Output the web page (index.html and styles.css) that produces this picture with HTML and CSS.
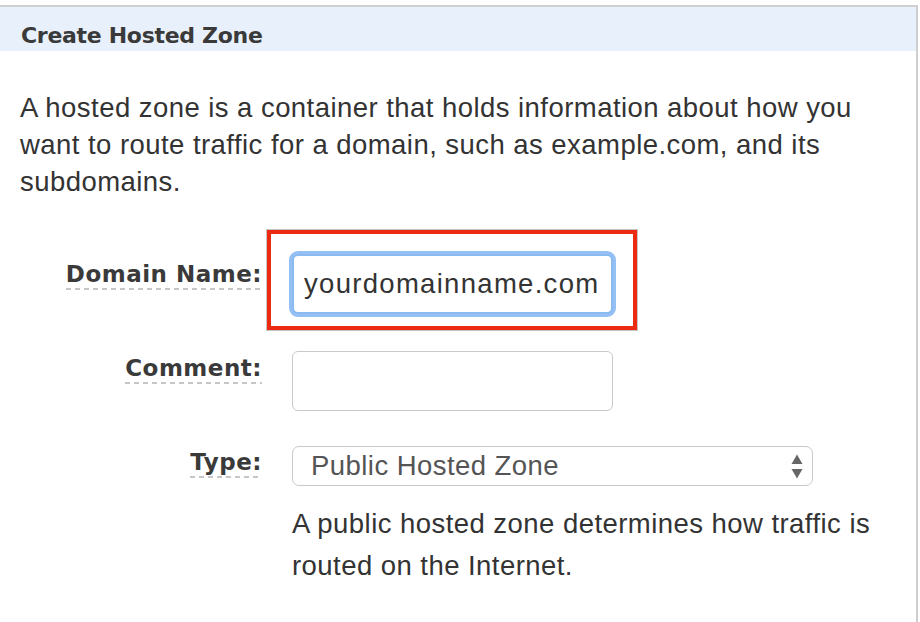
FILE: index.html
```html
<!DOCTYPE html>
<html>
<head>
<meta charset="utf-8">
<link rel="stylesheet" href="styles.css">
</head>
<body>
<div class="panel">
  <div class="panel-header"><h2 class="panel-title">Create Hosted Zone</h2></div>
  <div class="panel-body">
    <p class="intro">A hosted zone is a container that holds information about how you want to route traffic for a domain, such as example.com, and its subdomains.</p>
    <div class="form">
      <div class="row row-domain">
        <div class="label-cell"><span class="label">Domain Name:</span></div>
        <div class="field-cell">
          <div class="highlight-wrap">
            <input class="text-input focused" type="text" value="yourdomainname.com">
            <span class="highlight"></span>
          </div>
        </div>
      </div>
      <div class="row row-comment">
        <div class="label-cell"><span class="label">Comment:</span></div>
        <div class="field-cell">
          <input class="text-input" type="text" value="">
        </div>
      </div>
      <div class="row row-type">
        <div class="label-cell"><span class="label">Type:</span></div>
        <div class="field-cell">
          <div class="select">
            <span class="select-value">Public Hosted Zone</span>
            <svg class="select-arrows" width="12" height="25" viewBox="0 0 12 25"><path d="M6 0.5 L11.5 10 H0.5 Z" fill="#666"/><path d="M6 24.5 L11.5 15 H0.5 Z" fill="#666"/></svg>
          </div>
          <p class="help">A public hosted zone determines how traffic is routed on the Internet.</p>
        </div>
      </div>
    </div>
  </div>
</div>
</body>
</html>
```
FILE: styles.css
```css
html, body {
  margin: 0;
  padding: 0;
  background: #fff;
}
body {
  padding: 5px 2px 0 0;
  font-family: "Liberation Sans", Arial, sans-serif;
  color: #333;
}
.panel {
  border-top: 2px solid #cfcfcf;
  border-right: 2px solid #cfcfcf;
  height: 617px;
  box-sizing: border-box;
}
.panel-header {
  background: #e8f1fb;
  height: 44px;
  box-sizing: border-box;
  padding: 16px 0 0 21px;
}
.panel-title {
  margin: 0;
  font-family: "DejaVu Sans", Verdana, sans-serif;
  font-weight: bold;
  font-size: 22px;
  line-height: 26px;
  letter-spacing: -0.3px;
  color: #3a3a3a;
}
.panel-body {
  padding: 0 0 0 20px;
}
.intro {
  margin: 38px 0 0 0;
  font-size: 27.5px;
  letter-spacing: 0.45px;
  line-height: 37px;
  color: #333;
  width: 870px;
}
.form {
  margin-top: 30px;
}
.row {
  display: grid;
  grid-template-columns: 242px 1fr;
  column-gap: 30px;
}
.label-cell {
  text-align: right;
  line-height: 27px;
}
.label {
  font-family: "DejaVu Sans", Verdana, sans-serif;
  font-weight: bold;
  font-size: 23px;
  letter-spacing: 0.5px;
  color: #3a3a3a;
  padding-bottom: 3px;
  background-image: repeating-linear-gradient(to right, #c6c6c6 0 5px, transparent 5px 9px);
  background-size: 100% 2px;
  background-position: left bottom;
  background-repeat: no-repeat;
}
.row-domain .label-cell { padding-top: 31px; }
.row-comment { margin-top: 37px; }
.row-comment .label-cell { padding-top: 4px; }
.row-type { margin-top: 35px; }
.row-type .label-cell { padding-top: 3px; }
.highlight-wrap {
  position: relative;
  width: 321px;
  padding-top: 24px;
}
.highlight {
  position: absolute;
  left: -25px;
  top: 0;
  width: 370px;
  height: 100px;
  box-sizing: border-box;
  border: 4px solid #ec2a12;
  box-shadow: 0 0 0 1px #c4c4c4;
  pointer-events: none;
}
.text-input {
  display: block;
  width: 321px;
  height: 60px;
  box-sizing: border-box;
  border: 1px solid #c9c9c9;
  border-radius: 6px;
  font-family: "Liberation Sans", Arial, sans-serif;
  font-size: 27.5px;
  letter-spacing: 1.3px;
  color: #333;
  padding: 0 11px;
  background: #fff;
  outline: none;
}
.text-input.focused {
  border: 2px solid #8bbaf0;
  padding: 0 10px;
  box-shadow: 0 0 0 3px #94c0f3;
}
.select {
  width: 521px;
  height: 40px;
  box-sizing: border-box;
  border: 1px solid #c9c9c9;
  border-radius: 7px;
  display: flex;
  align-items: center;
  justify-content: space-between;
  padding: 0 9px 0 18px;
}
.select-value {
  font-size: 27.5px;
  letter-spacing: 0.45px;
  color: #555;
}
.help {
  margin: 17px 0 0 0;
  font-size: 27.5px;
  letter-spacing: 0.45px;
  line-height: 42px;
  color: #333;
  width: 600px;
}
```
